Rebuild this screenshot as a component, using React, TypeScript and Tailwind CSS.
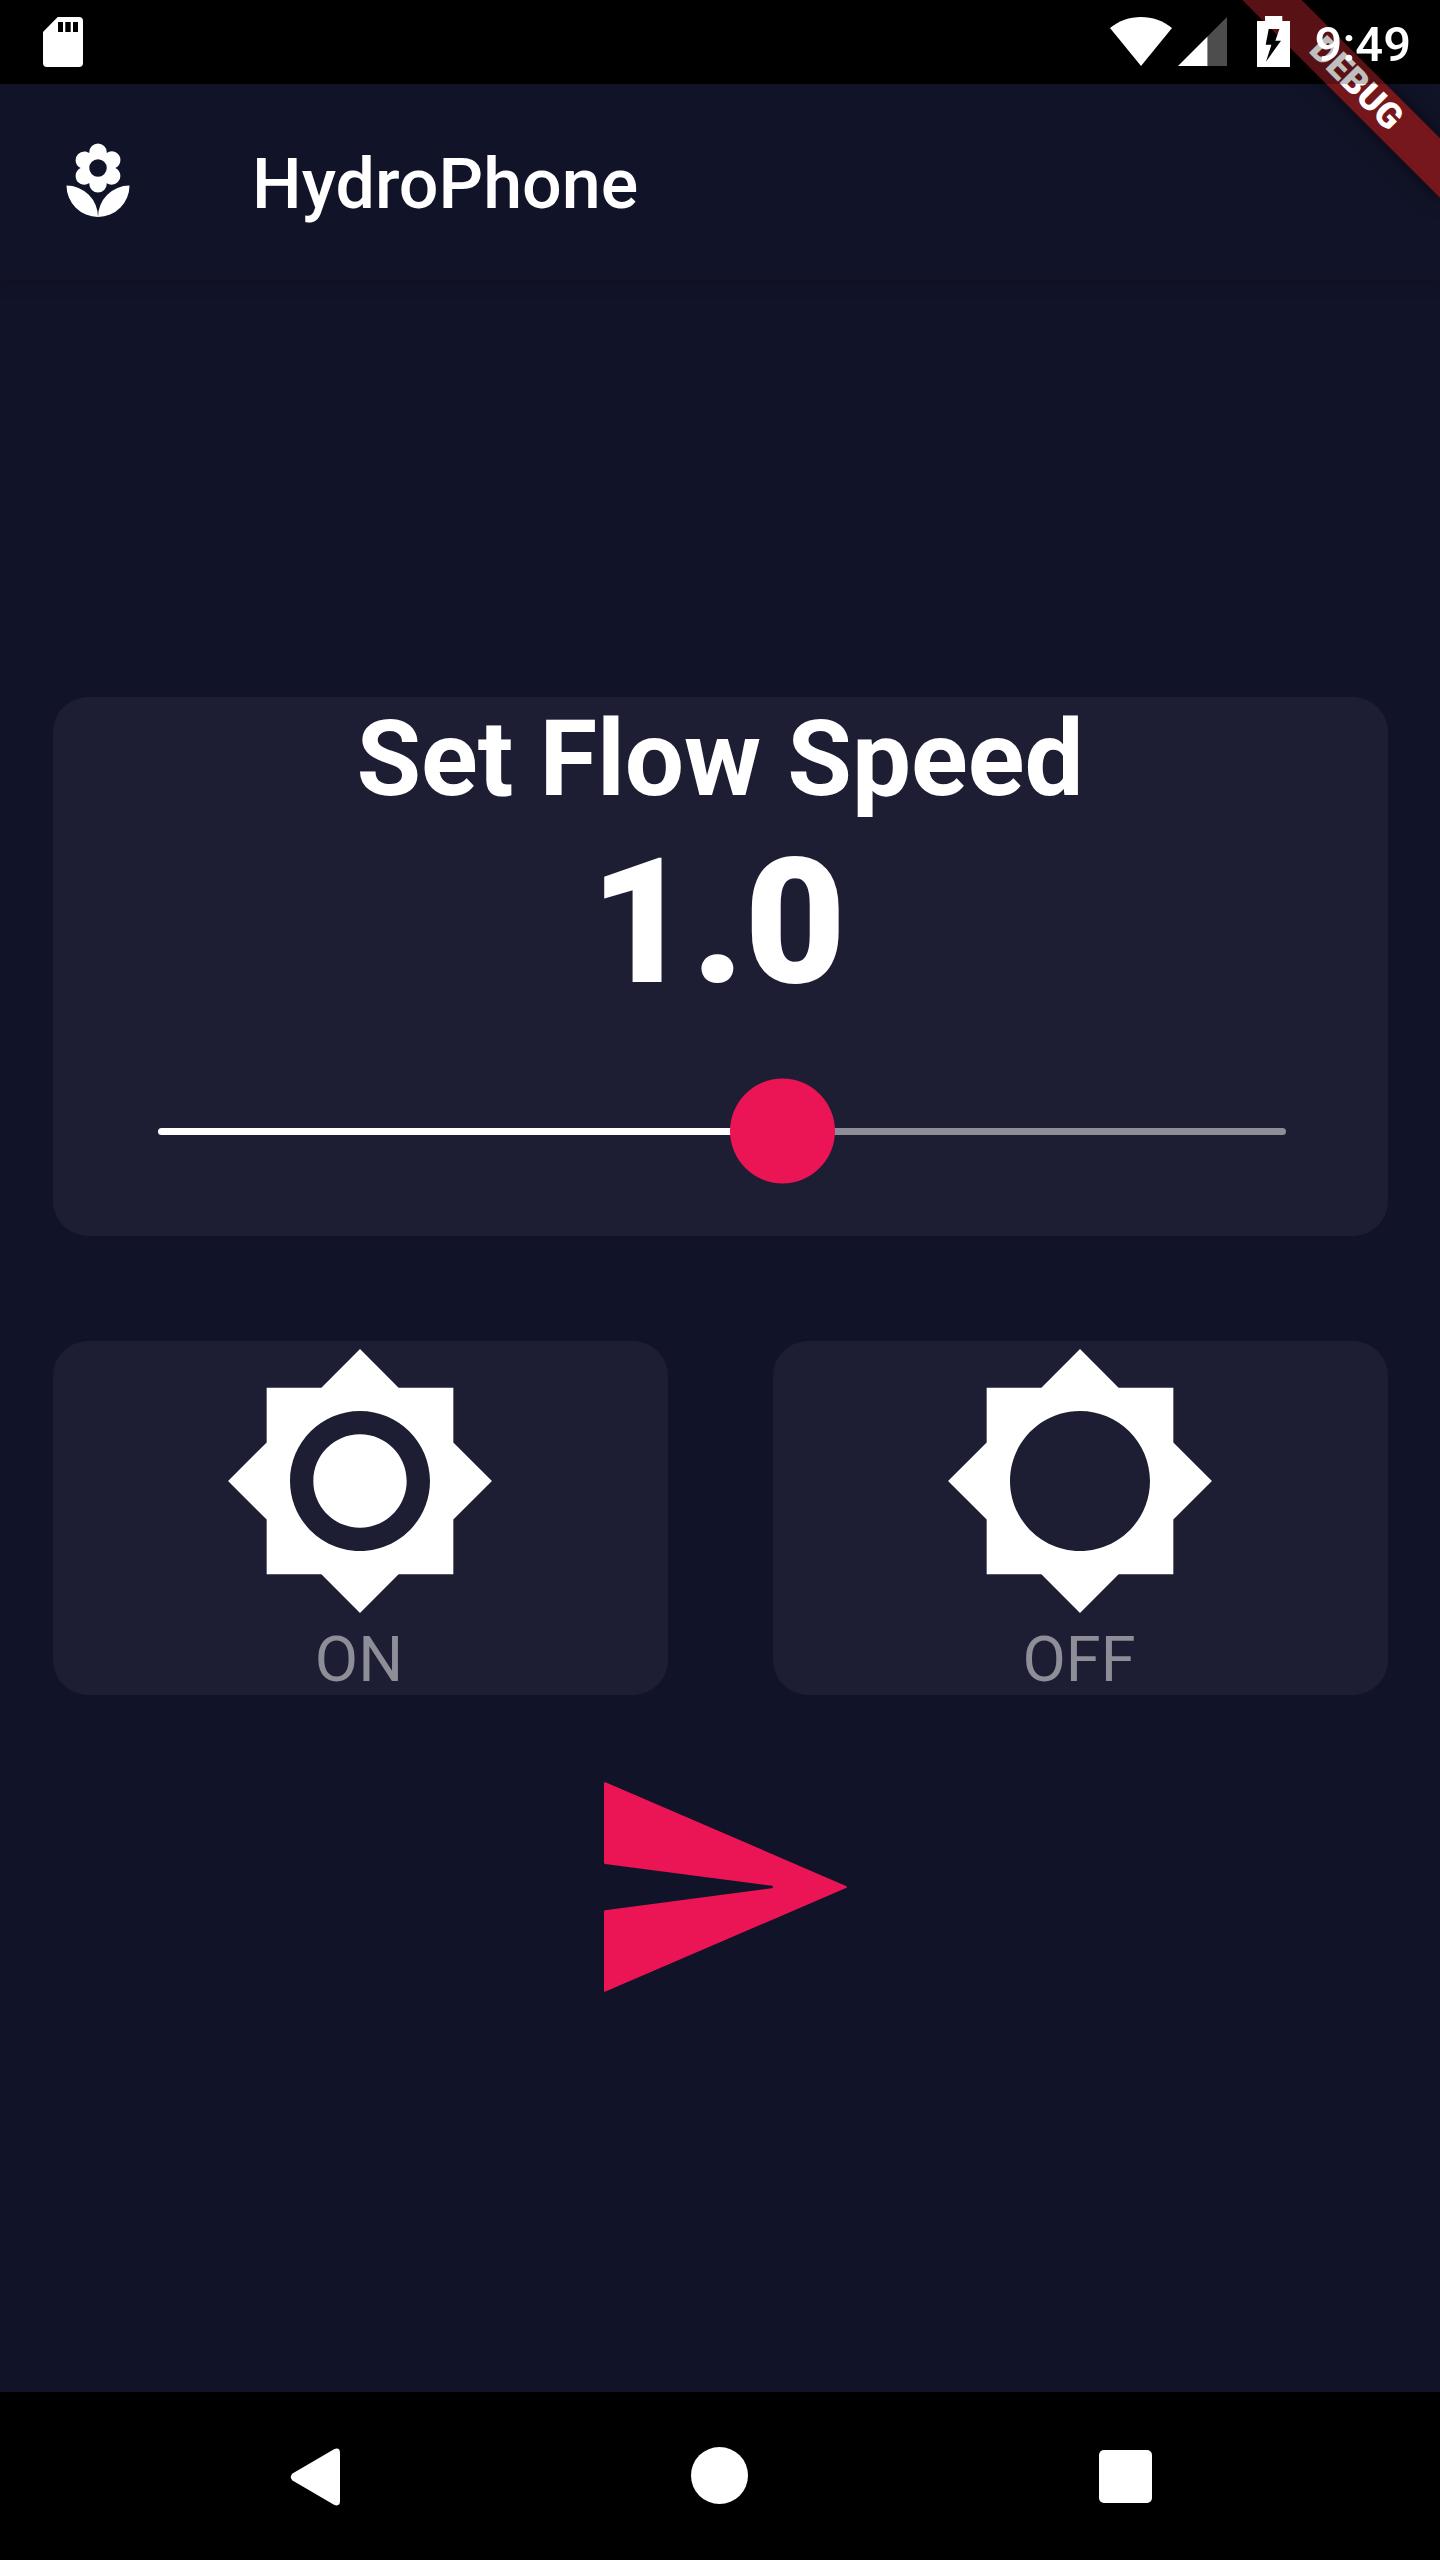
import { MdBrightness5, MdBrightnessHigh, MdLocalFlorist } from "react-icons/md";
import type { ReactNode } from "react";

function StatusBar() {
  return (
    <header className="relative z-20 flex h-[84px] justify-between bg-black/25 pl-[43px] pr-[29px] text-white">
      <svg className="mt-[17px] h-[50px] w-[40px]" viewBox="0 0 40 50" fill="currentColor">
        <path
          fillRule="evenodd"
          d="M14.700 0H36a4 4 0 0 1 4 4V46a4 4 0 0 1-4 4H4a4 4 0 0 1-4-4V15ZM15 5v10h5V5ZM22.300 5v10h5.400V5ZM30 5v10h5V5Z"
        />
      </svg>
      <div className="flex">
        <svg className="mt-[17px] h-[49px] w-[62px]" viewBox="0 0 62 49" fill="currentColor">
          <path d="M31 49 0 11C9 3.800 19.500 0 31 0s22 3.800 31 11Z" />
        </svg>
        <svg className="ml-[6px] mt-[17px] h-[49px] w-[49px]" viewBox="0 0 49 49" fill="currentColor">
          <path d="M49 0V49H29.500V19.500Z" opacity=".3" />
          <path d="M29.500 19.500V49H0Z" />
        </svg>
        <svg className="ml-[30px] mt-[16px] h-[51px] w-[33px]" viewBox="0 0 33 51" fill="currentColor">
          <path
            fillRule="evenodd"
            d="M8 0H25.300V5H33V51H0V5H8ZM11.700 13 8.700 28.700H14.400L9 45.700 24 24.700H18.400L22.400 13Z"
          />
        </svg>
        <span className="ml-[25px] mt-[16px] text-[49px] font-medium leading-[58px]">9:49</span>
      </div>
    </header>
  );
}

function DebugBanner() {
  return (
    <div className="pointer-events-none absolute right-0 top-0 z-10 h-[280px] w-[280px] overflow-hidden">
      <div className="absolute left-[56px] top-[63px] flex h-[42px] w-[280px] rotate-45 items-center justify-center bg-[#76171c] text-[35.7px] font-black leading-none text-white shadow-[0_0_21px_rgba(0,0,0,0.5)]">
        DEBUG
      </div>
    </div>
  );
}

function SwitchCard({ icon, label }: { icon: ReactNode; label: string }) {
  return (
    <button className="flex h-[354px] flex-1 flex-col items-center rounded-[35px] bg-[#1d1e33] text-white">
      {icon}
      <span className="mr-[2px] mt-[2px] text-[63px] leading-[74px] text-[#8d8e98]">{label}</span>
    </button>
  );
}

export default function App() {
  return (
    <div className="relative flex h-[2560px] w-[1440px] flex-col overflow-hidden bg-[#111328] font-[Roboto,sans-serif]">
      <div className="absolute inset-x-0 top-0 h-[84px] bg-black" />
      <StatusBar />
      <DebugBanner />

      <div className="flex h-[196px] shrink-0 items-center bg-[#111328] pl-[56px] text-white shadow-[0_4px_10px_rgba(17,16,34,0.8)]">
        <MdLocalFlorist className="size-[84px]" />
        <h1 className="ml-[112px] mt-[4px] text-[70px] font-medium leading-[82px]">HydroPhone</h1>
      </div>

      <main className="flex flex-1 flex-col items-center justify-center px-[52.5px]">
        <section className="mt-[52px] flex h-[539px] w-full flex-col items-center rounded-[35px] bg-[#1d1e33] text-white">
          <h2 className="mt-px text-[105px] font-bold leading-[123px]">Set Flow Speed</h2>
          <div className="mr-[4px] text-[175px] font-black leading-[203px]">1.0</div>
          <div className="relative mt-[2px] flex w-full flex-1 items-center pl-[105px] pr-[101.5px]">
            <div className="h-[7px] w-[625px] rounded-l-full bg-white" />
            <div className="h-[7px] flex-1 rounded-r-full bg-[#8d8e98]" />
            <div className="absolute left-[677.5px] top-1/2 size-[105px] -translate-y-1/2 rounded-full bg-[#eb1555]" />
          </div>
        </section>

        <div className="mt-[105px] flex w-full gap-[105px]">
          <SwitchCard icon={<MdBrightnessHigh className="size-[280px] shrink-0" />} label="ON" />
          <SwitchCard icon={<MdBrightness5 className="size-[280px] shrink-0" />} label="OFF" />
        </div>

        <button className="mt-[52px] text-[#eb1555]">
          <svg className="size-[280px]" viewBox="0 0 280 280" fill="currentColor">
            <path d="M24 36Q24 35 25.500 35.200L266 139Q268 140 266 141L25.500 244.600Q24 245 24 244V164.500Q24 163.500 25 163.300L192 141.300Q194 140 192 138.800L25 117Q24 116.800 24 115.800Z" />
          </svg>
        </button>
      </main>

      <nav className="flex h-[168px] shrink-0 items-center bg-black pl-[290px] text-white">
        <svg className="mt-px h-[58px] w-[50px]" viewBox="0 0 50 58" fill="currentColor">
          <path d="M2.500 25.500 44 1.200Q50-1 50 5V53Q50 59 44 56.800L2.500 32.500Q-1 29 2.500 25.500Z" />
        </svg>
        <div className="mb-px ml-[351px] size-[57px] rounded-full bg-white" />
        <div className="ml-[351px] mt-px size-[53px] rounded-[5px] bg-white" />
      </nav>
    </div>
  );
}
